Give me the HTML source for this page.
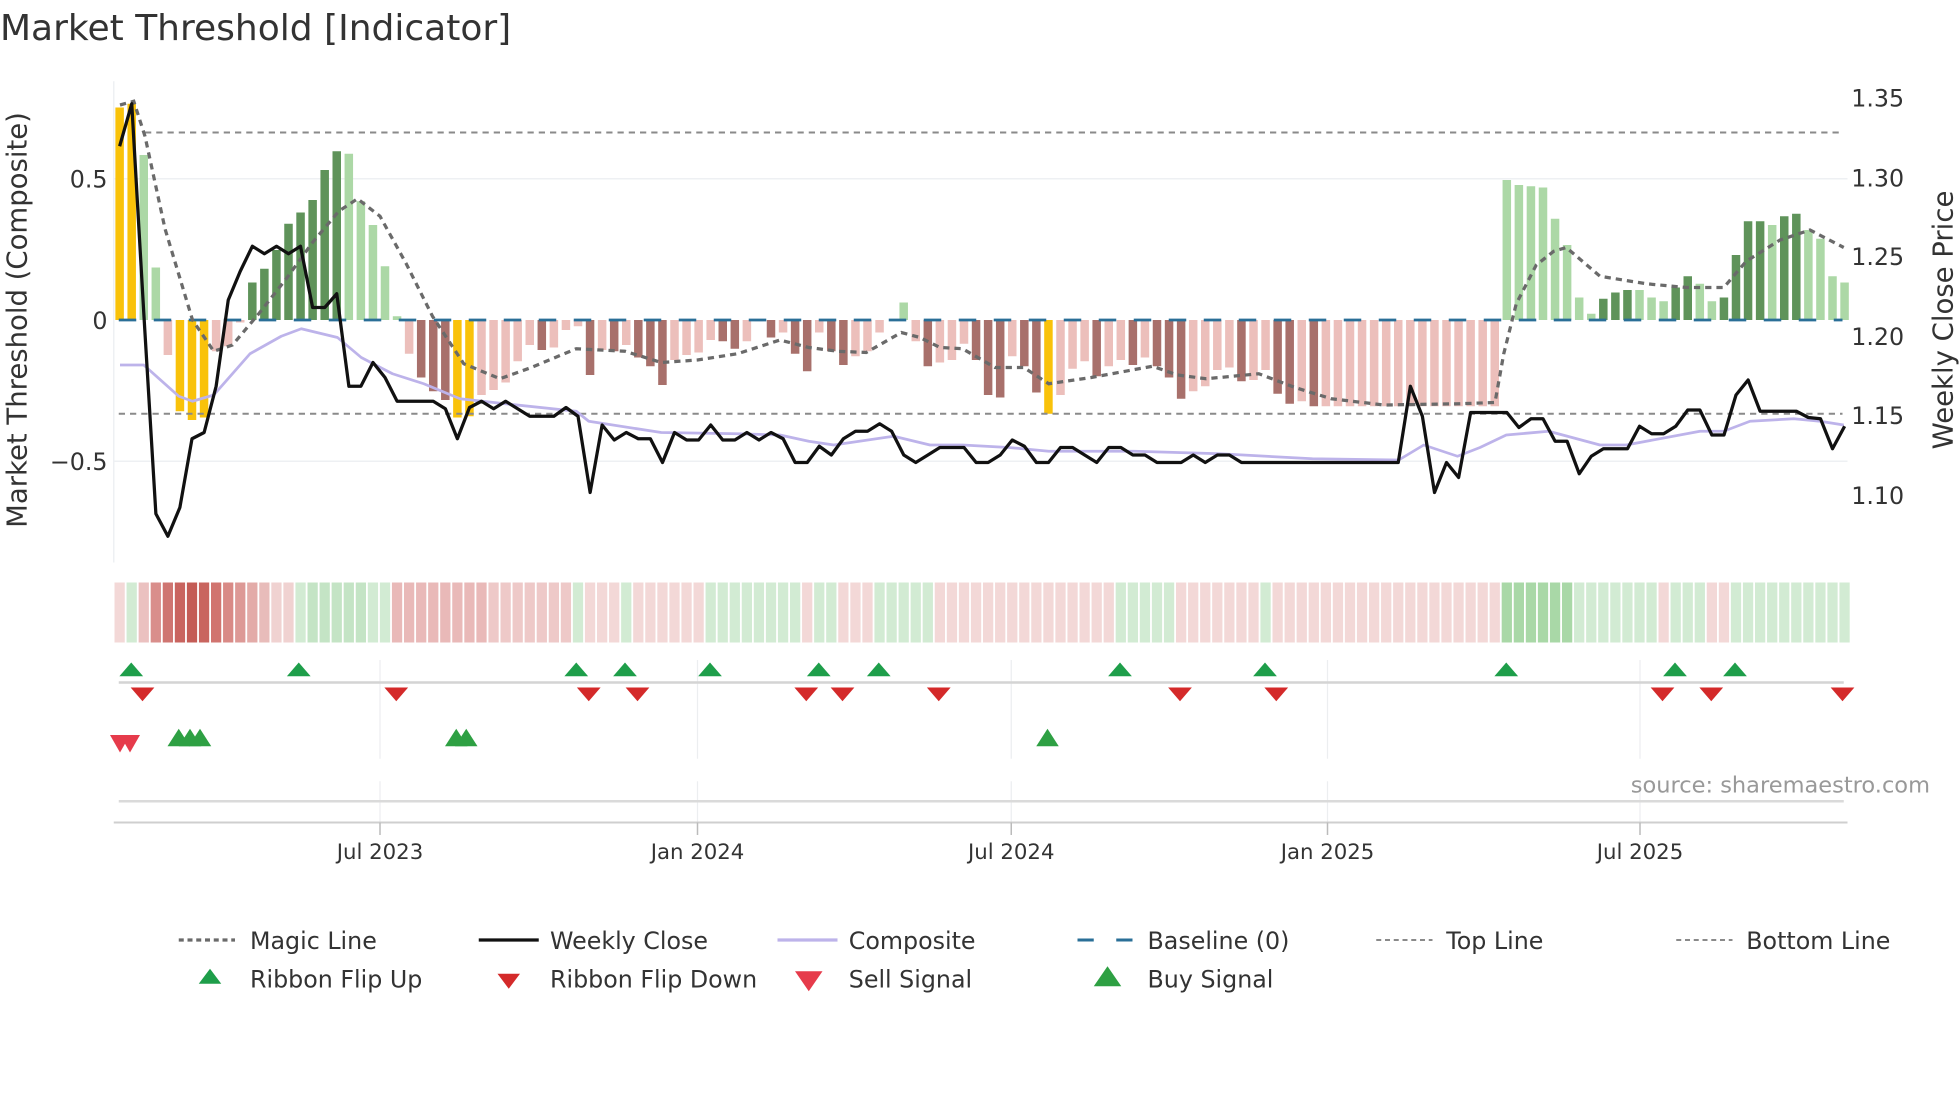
<!DOCTYPE html>
<html><head><meta charset="utf-8"><style>
html,body{margin:0;padding:0;background:#fff;}
svg{display:block;font-family:"DejaVu Sans","Liberation Sans",sans-serif;}
</style></head><body>
<svg id="s" width="1960" height="1102" viewBox="0 0 1568 881.6" xmlns="http://www.w3.org/2000/svg">
<rect x="0" y="0" width="1568" height="881.6" fill="#fff"/>
<text x="0" y="32" font-size="28.8" fill="#333">Market Threshold [Indicator]</text>
<g id="g"></g>
</svg>
<script>
var NS="http://www.w3.org/2000/svg",G=document.getElementById('g');
function el(t,a,txt){var e=document.createElementNS(NS,t);for(var k in a)e.setAttribute(k,a[k]);if(txt!==undefined)e.textContent=txt;G.appendChild(e);return e;}
var X0=95.7,P=9.65,B=256;
function xi(i){return X0+i*P;}
[143,369].forEach(function(y){el('line',{x1:91,x2:1478,y1:y,y2:y,stroke:'#eef0f3','stroke-width':1.2});});
el('line',{x1:91,x2:91,y1:65,y2:450,stroke:'#eef0f3','stroke-width':1.2});
var C={Y:'#f9c20a',G:'#5f935a',g:'#acd8a6',R:'#a8706b',r:'#ecbfbb'};
var bars="Y170 Y173 g132 g42 r-28 Y-73 Y-80 Y-78 r-25 r-21 r-2 G30 G41 G56 G77 G86 G96 G120 G135 g133 g95 g76 g43 g3 r-27 R-46 R-57 R-64 Y-78 Y-77 r-60 r-56 r-50 r-33 r-20 R-24 r-22 r-8 r-5 R-44 r-24 R-25 r-20 R-30 R-37 R-52 r-32 r-28 r-26 r-16 R-17 R-23 r-17 r-1 R-14 r-10 R-27 R-41 r-10 R-25 R-36 r-29 r-25 r-10 r0 g14 r-17 R-37 r-34 r-32 r-19 R-32 R-60 R-62 r-29 R-37 R-58 Y-75 r-60 r-39 r-33 R-45 r-37 r-32 R-36 r-30 R-37 R-46 R-63 r-57 r-53 r-40 r-38 R-49 r-48 r-40 R-59 R-67 r-65 R-69 r-69 r-69 r-69 r-69 r-69 r-69 r-69 r-69 r-69 r-69 r-69 r-69 r-69 r-69 r-69 g112 g108 g107 g106 g81 g60 g18 g5 G17 G22 G24 g24 g18 g15 G26 G35 g29 g15 G18 G52 G79 G79 g76 G83 G85 g72 g65 g35 g30".split(' ');
bars.forEach(function(b,i){var c=C[b[0]],h=parseFloat(b.slice(1));if(h==0)return;var y=h>0?B-h:B;el('rect',{x:xi(i)-3.4,y:y,width:6.8,height:Math.abs(h),fill:c});});
el('line',{x1:116,x2:1474,y1:106,y2:106,stroke:'#8a8a8a','stroke-width':1.6,'stroke-dasharray':'5 4'});
el('line',{x1:95,x2:1474,y1:331,y2:331,stroke:'#8a8a8a','stroke-width':1.6,'stroke-dasharray':'5 4'});
el('line',{x1:95,x2:1474,y1:B,y2:B,stroke:'#2a6f97','stroke-width':2.2,'stroke-dasharray':'14 14'});
function pl(pts,a){a.points=pts.map(function(p){return p[0]+','+p[1];}).join(' ');a.fill='none';el('polyline',a);}
pl([[96,292],[115,292],[143,317],[154,321],[171,316],[200,283],[225,269],[241,263],[270,270],[289,286],[314,299],[339,307],[368,319],[404,323],[461,329],[471,337],[529,346],[590,347],[624,348],[647,353],[667,356],[715,349],[744,356],[770,356],[807,358],[839,361],[907,361],[976,363],[1050,367],[1119,368],[1139,356],[1166,365],[1184,358],[1205,348],[1239,345],[1280,356],[1301,356],[1360,345],[1379,345],[1400,337],[1435,335],[1456,337],[1475,340]],{stroke:'#bdb3ea','stroke-width':2.2,'stroke-linejoin':'round'});
pl([[96,84],[107,81],[116,109],[132,183],[154,256],[171,281],[186,276],[207,251],[229,223],[250,194],[271,169],[286,159],[304,173],[325,211],[346,253],[371,291],[400,303],[425,294],[461,279],[500,281],[529,290],[558,288],[590,283],[624,272],[647,278],[670,281],[693,282],[721,266],[736,270],[752,278],[770,279],[796,294],[819,294],[839,307],[873,302],[922,293],[942,300],[965,303],[1007,299],[1036,310],[1065,319],[1107,324],[1168,323],[1196,322],[1203,283],[1213,243],[1229,212],[1243,201],[1253,198],[1280,221],[1317,227],[1349,230],[1379,230],[1397,209],[1424,192],[1448,184],[1475,198]],{stroke:'#6a6a6a','stroke-width':2.6,'stroke-dasharray':'5 4'});
var cy=[117,83,250,411,429,406,351,346,309,240,217,197,203,197,203,197,246,246,235,309,309,290,302,321,321,321,321,327,351,326,321,327,321,327,333,333,333,326,333,394,340,352,346,351,351,370,346,352,352,340,352,352,346,352,346,351,370,370,357,364,351,345,345,339,345,364,370,364,358,358,358,370,370,364,352,357,370,370,358,358,364,370,358,358,364,364,370,370,370,364,370,364,364,370,370,370,370,370,370,370,370,370,370,370,370,370,370,309,333,394,370,382,330,330,330,330,342,335,335,353,353,379,365,359,359,359,341,347,347,341,328,328,348,348,316,304,329,329,329,329,334,335,359,341];
pl(cy.map(function(y,i){return [xi(i).toFixed(1),y];}),{stroke:'#111','stroke-width':2.6,'stroke-linejoin':'round'});
[[143,'0.5'],[256,'0'],[369,'−0.5']].forEach(function(t){el('text',{x:86,y:t[0]+7,'font-size':19,fill:'#333','text-anchor':'end'},t[1]);});
[[78,'1.35'],[142,'1.30'],[205,'1.25'],[269,'1.20'],[332,'1.15'],[396,'1.10']].forEach(function(t){el('text',{x:1481,y:t[0]+7,'font-size':19,fill:'#333'},t[1]);});
el('text',{x:0,y:0,'font-size':22,fill:'#333','text-anchor':'middle',transform:'translate(21,256) rotate(-90)'},'Market Threshold (Composite)');
el('text',{x:0,y:0,'font-size':22,fill:'#333','text-anchor':'middle',transform:'translate(1562,256) rotate(-90)'},'Weekly Close Price');
var dark=['#ebc1c0','#d98e8b','#cf7571','#c9645f','#c45c56','#c9655f','#d1746f','#d98a86','#dd9996','#e3aba8','#e8bcba','#f0d2d1','#f0d2d1'];
var greens={1:1,38:1,42:1,95:1};
function isG(i){return greens[i]||(i>=15&&i<=22)||(i>=49&&i<=56)||(i>=58&&i<=59)||(i>=63&&i<=67)||(i>=83&&i<=87)||(i>=115&&i<=127)||(i>=129&&i<=131)||(i>=134);}
for(var i=0;i<144;i++){var c;
 if(i>=2&&i<=14)c=dark[i-2];
 else if(isG(i))c=(i>=115&&i<=120)?'#a9d8a7':(i>=16&&i<=20?'#c4e4c5':'#d2ebd3');
 else if(i>=23&&i<=37)c=(i<=30?'#e9b9b8':'#eec9c8');
 else c='#f3d8d7';
 el('rect',{x:xi(i)-4.1,y:466,width:8.2,height:48,fill:c});}
[304,558,809,1062,1312].forEach(function(x){el('line',{x1:x,x2:x,y1:528,y2:607,stroke:'#eceef0','stroke-width':1});el('line',{x1:x,x2:x,y1:625,y2:658,stroke:'#eceef0','stroke-width':1});});
el('line',{x1:95,x2:1475,y1:546,y2:546,stroke:'#d4d4d4','stroke-width':2});
function up(x,y,w,h,c){el('polygon',{points:(x-w/2)+','+(y+h)+' '+(x+w/2)+','+(y+h)+' '+x+','+y,fill:c});}
function dn(x,y,w,h,c){el('polygon',{points:(x-w/2)+','+y+' '+(x+w/2)+','+y+' '+x+','+(y+h),fill:c});}
[105,239,461,500,568,655,703,896,1012,1205,1340,1388].forEach(function(x){up(x,530,19,11,'#1e9e4a');});
[114,317,471,510,645,674,751,944,1021,1330,1369,1474].forEach(function(x){dn(x,550,19,11,'#d42a2a');});
[96,104].forEach(function(x){dn(x,588,16,14,'#e63b4b');});
[143,152,160,365,373,838].forEach(function(x){up(x,583,18,14,'#2ea043');});
el('text',{x:1544,y:634,'font-size':18,fill:'#999','text-anchor':'end'},'source: sharemaestro.com');
el('line',{x1:95,x2:1475,y1:641,y2:641,stroke:'#dadada','stroke-width':2});
el('line',{x1:91,x2:1478,y1:658,y2:658,stroke:'#cfcfcf','stroke-width':1.6});
[[304,'Jul 2023'],[558,'Jan 2024'],[809,'Jul 2024'],[1062,'Jan 2025'],[1312,'Jul 2025']].forEach(function(t){el('line',{x1:t[0],x2:t[0],y1:658,y2:668,stroke:'#bbb','stroke-width':1.2});el('text',{x:t[0],y:687,'font-size':17,fill:'#333','text-anchor':'middle'},t[1]);});
var L1=752,L2=783;
el('line',{x1:143,x2:188,y1:L1,y2:L1,stroke:'#6a6a6a','stroke-width':2.6,'stroke-dasharray':'4 3'});
el('line',{x1:383,x2:431,y1:L1,y2:L1,stroke:'#111','stroke-width':2.6});
el('line',{x1:622,x2:670,y1:L1,y2:L1,stroke:'#bdb3ea','stroke-width':2.6});
el('line',{x1:862,x2:906,y1:L1,y2:L1,stroke:'#2a6f97','stroke-width':2.4,'stroke-dasharray':'13 18'});
el('line',{x1:1101,x2:1146,y1:L1,y2:L1,stroke:'#8a8a8a','stroke-width':1.6,'stroke-dasharray':'4 3'});
el('line',{x1:1341,x2:1386,y1:L1,y2:L1,stroke:'#8a8a8a','stroke-width':1.6,'stroke-dasharray':'4 3'});
[[200,'Magic Line'],[440,'Weekly Close'],[679,'Composite'],[918,'Baseline (0)'],[1157,'Top Line'],[1397,'Bottom Line']].forEach(function(t){el('text',{x:t[0],y:L1+7,'font-size':19,fill:'#333'},t[1]);});
up(168,775,18,12,'#1e9e4a');dn(407,779,18,12,'#d42a2a');dn(647,777,22,16,'#e63b4b');up(886,773,22,16,'#2ea043');
[[200,'Ribbon Flip Up'],[440,'Ribbon Flip Down'],[679,'Sell Signal'],[918,'Buy Signal']].forEach(function(t){el('text',{x:t[0],y:L2+7,'font-size':19,fill:'#333'},t[1]);});
</script>
</body></html>
